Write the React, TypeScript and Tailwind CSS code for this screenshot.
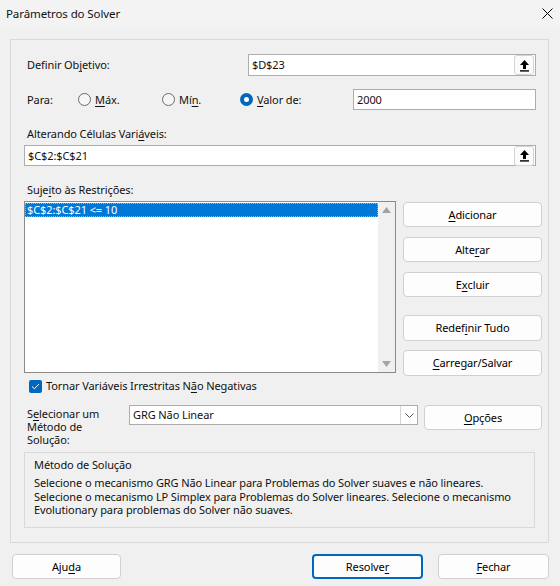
import React from 'react';

const font = { fontFamily: '"Noto Sans", "Open Sans", sans-serif' };

const PickButton: React.FC = () => (
  <div className="w-[20px] h-[20px] mr-[1px] flex items-center justify-center rounded-[3px] border border-[#d4d4d4] bg-[#fbfbfb]">
    <svg width="11" height="13" viewBox="0 0 11 13">
      <path d="M5.5 1 L10 6 L7 6 L7 10 L4 10 L4 6 L1 6 Z" fill="#000" />
      <rect x="1" y="11.2" width="9" height="1.4" fill="#000" />
    </svg>
  </div>
);

const Radio: React.FC<{ checked?: boolean }> = ({ checked }) =>
  checked ? (
    <span className="w-[13px] h-[13px] rounded-full bg-[#0067c0] flex items-center justify-center">
      <span className="w-[5px] h-[5px] rounded-full bg-white"></span>
    </span>
  ) : (
    <span className="w-[13px] h-[13px] rounded-full border border-[#6b6b6b] bg-[#f6f6f6]"></span>
  );

const Btn: React.FC<{ className?: string; children: React.ReactNode; primary?: boolean }> = ({
  className = '',
  children,
  primary,
}) => (
  <div
    className={`flex items-center justify-center rounded-[4px] bg-[#fdfdfd] text-black ${
      primary ? 'border-2 border-[#0067c0]' : 'border border-[#d0d0d0]'
    } ${className}`}
  >
    {children}
  </div>
);

const U: React.FC<{ children: React.ReactNode }> = ({ children }) => (
  <span className="underline underline-offset-[2px] decoration-[1px]">{children}</span>
);

export default function App() {
  return (
    <div
      className="w-[560px] h-[586px] bg-[#f0f0f0] text-[11px] tracking-[-0.1px] text-[#111] leading-[16px] overflow-hidden"
      style={font}
    >
      {/* title bar */}
      <div className="h-[27px] bg-[#f3f3f3] flex items-center justify-between pl-[6px] pr-[7px]">
        <span className="text-[11.5px]">Parâmetros do Solver</span>
        <svg width="11" height="11" viewBox="0 0 11 11">
          <path d="M0.5 0.5 L10.5 10.5 M10.5 0.5 L0.5 10.5" stroke="#000" strokeWidth="1" />
        </svg>
      </div>

      {/* panel */}
      <div className="mt-[12px] ml-[10px] w-[539px] h-[504px] border border-[#d9d9d9] pl-[13px] flex flex-col">
        {/* objective */}
        <div className="mt-[14px] flex items-center h-[22px]">
          <span className="w-[224px] pl-[3px]">
            Definir Ob<U>j</U>etivo:
          </span>
          <div className="w-[288px] h-[22px] bg-white border border-[#adadad] flex items-center justify-between pl-[3px]">
            <span>$D$23</span>
            <PickButton />
          </div>
        </div>

        {/* para */}
        <div className="mt-[13px] flex items-center h-[21px]">
          <span className="w-[54px] pl-[3px]">Para:</span>
          <span className="w-[84px] flex items-center gap-[4px]">
            <Radio />
            <span>
              <U>M</U>áx.
            </span>
          </span>
          <span className="w-[78px] flex items-center gap-[4px]">
            <Radio />
            <span>
              Mí<U>n</U>.
            </span>
          </span>
          <span className="w-[113px] flex items-center gap-[4px]">
            <Radio checked />
            <span>
              <U>V</U>alor de:
            </span>
          </span>
          <div className="w-[183px] h-[21px] bg-white border border-[#adadad] flex items-center pl-[3px]">2000</div>
        </div>

        {/* variables */}
        <div className="mt-[16px] pl-[3px] h-[16px]">
          Alterando Células Vari<U>á</U>veis:
        </div>
        <div className="mt-[3px] w-[512px] h-[21px] bg-white border border-[#adadad] flex items-center justify-between pl-[3px]">
          <span>$C$2:$C$21</span>
          <PickButton />
        </div>

        {/* constraints */}
        <div className="mt-[16px] pl-[3px] h-[16px]">
          Suje<U>i</U>to às Restrições:
        </div>
        <div className="mt-[3px] flex">
          <div className="w-[372px] h-[172px] bg-white border border-[#8a8a8a] flex">
            <div className="flex-1 pt-[1px]">
              <div className="h-[14px] bg-[#0078d7] text-white leading-[13px] pl-[2px] outline-1 outline-dotted outline-[#ff9f3a] -outline-offset-1">
                $C$2:$C$21 &lt;= 10
              </div>
            </div>
            <div className="w-[17px] bg-[#f0f0f0] flex flex-col items-center justify-between py-[5px]">
              <svg width="9" height="6" viewBox="0 0 9 6">
                <path d="M4.5 0 L9 6 L0 6 Z" fill="#a3a3a3" />
              </svg>
              <svg width="9" height="6" viewBox="0 0 9 6">
                <path d="M0 0 L9 0 L4.5 6 Z" fill="#a3a3a3" />
              </svg>
            </div>
          </div>
          <div className="ml-[7px] mt-[1px] flex flex-col">
            <Btn className="w-[139px] h-[25px]">
              <U>A</U>dicionar
            </Btn>
            <Btn className="w-[139px] h-[25px] mt-[10px]">
              Alte<U>r</U>ar
            </Btn>
            <Btn className="w-[139px] h-[25px] mt-[10px]">
              E<U>x</U>cluir
            </Btn>
            <Btn className="w-[139px] h-[26px] mt-[18px]">
              Redef<U>i</U>nir Tudo
            </Btn>
            <Btn className="w-[139px] h-[26px] mt-[9px]">
              <U>C</U>arregar/Salvar
            </Btn>
          </div>
        </div>

        {/* checkbox */}
        <div className="mt-[2px] flex items-center h-[16px] pl-[5px]">
          <span className="w-[13px] h-[13px] rounded-[2px] bg-[#0067c0] flex items-center justify-center">
            <svg width="9" height="7" viewBox="0 0 9 7">
              <path d="M1 3.5 L3.4 5.8 L8 1" stroke="#fff" strokeWidth="1" fill="none" />
            </svg>
          </span>
          <span className="ml-[4px]">
            Tornar Variáveis Irrestritas N<U>ã</U>o Negativas
          </span>
        </div>

        {/* method */}
        <div className="mt-[11px] flex h-[47px]">
          <div className="w-[105px] pl-[3px] pt-[2px] leading-[13px]">
            <div>
              S<U>e</U>lecionar um
            </div>
            <div>Método de</div>
            <div>Solução:</div>
          </div>
          <div className="w-[289px] h-[20px] bg-white border border-[#adadad] flex items-center justify-between pl-[3px]">
            <span>GRG Não Linear</span>
            <div className="w-[17px] h-[18px] border-l border-[#d4d4d4] flex items-center justify-center">
              <svg width="9" height="5" viewBox="0 0 9 5">
                <path d="M0.5 0.5 L4.5 4.5 L8.5 0.5" stroke="#555" strokeWidth="1" fill="none" />
              </svg>
            </div>
          </div>
          <Btn className="ml-[6px] w-[118px] h-[25px]">
            <U>O</U>pções
          </Btn>
        </div>

        {/* description */}
        <div className="w-[511px] h-[76px] border border-[#d9d9d9] pl-[9px] pt-[4px]">
          <div className="h-[16px]">Método de Solução</div>
          <div className="mt-[3px] leading-[13.5px] whitespace-nowrap">
            <div>Selecione o mecanismo GRG Não Linear para Problemas do Solver suaves e não lineares.</div>
            <div>Selecione o mecanismo LP Simplex para Problemas do Solver lineares. Selecione o mecanismo</div>
            <div>Evolutionary para problemas do Solver não suaves.</div>
          </div>
        </div>
      </div>

      {/* bottom buttons */}
      <div className="mt-[11px] flex pl-[12px]">
        <Btn className="w-[109px] h-[25px]">
          Aju<U>d</U>a
        </Btn>
        <Btn primary className="ml-[191px] w-[111px] h-[25px]">
          Resolve<U>r</U>
        </Btn>
        <Btn className="ml-[15px] w-[111px] h-[25px]">
          <U>F</U>echar
        </Btn>
      </div>
    </div>
  );
}
